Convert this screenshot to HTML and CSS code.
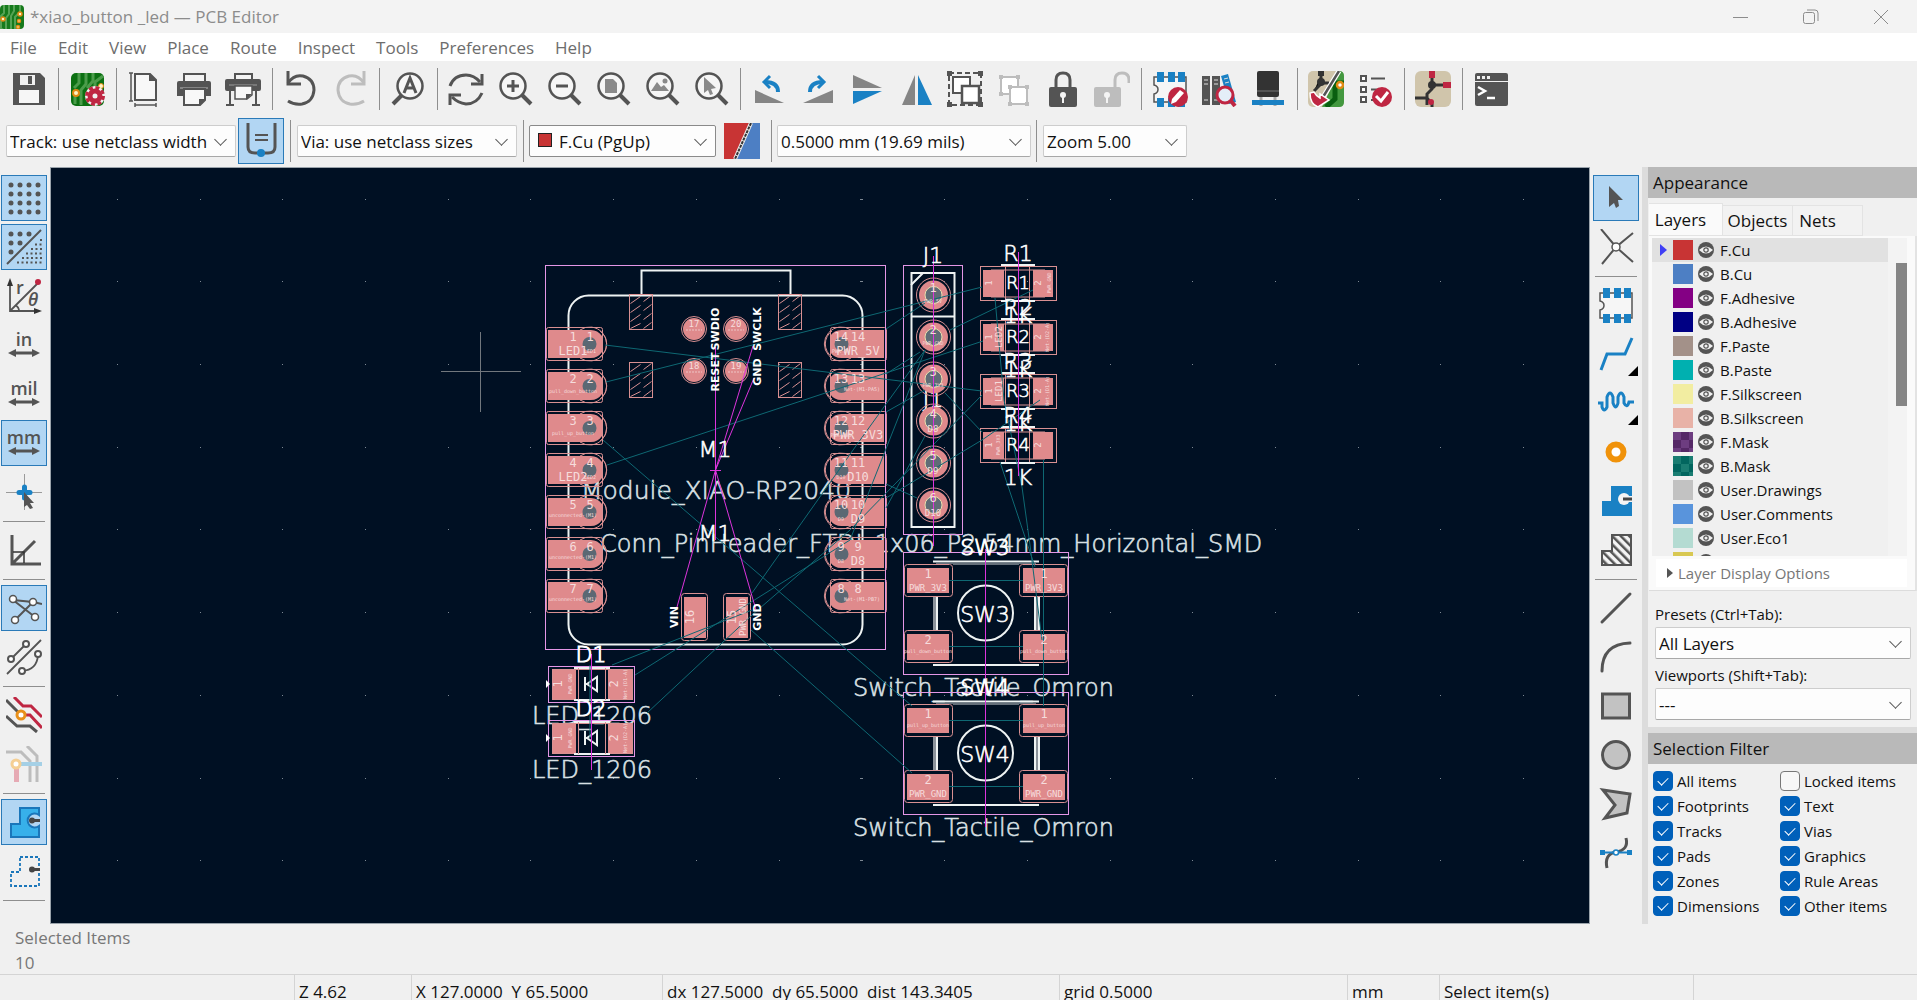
FILE: index.html
```html
<!DOCTYPE html>
<html lang="en">
<head>
<meta charset="UTF-8">
<meta name="viewport" content="width=device-width, initial-scale=1.0">
<title>*xiao_button _led — PCB Editor</title>
<link rel="stylesheet" href="styles.css">
</head>
<body>

<!-- shared shapes -->
<svg class="defs" aria-hidden="true">
    <defs>
        <g id="lens"><circle cx="15" cy="15" r="12.5" fill="#f6f6f6" stroke="#545454" stroke-width="2.5"/><path d="M24 24L33 33" stroke="#545454" stroke-width="4"/></g>
        <g id="eye"><circle cx="8" cy="8" r="8" fill="#545454"/><path d="M1 8Q8 1 15 8Q8 15 1 8Z" fill="#f0f0f0"/><circle cx="8" cy="8" r="2.200" fill="none" stroke="#545454" stroke-width="1.200"/></g>
        <g id="arrows"><path d="M8 0H27" stroke="#545454" stroke-width="3"/><path d="M2 0L10 -4V4ZM34 0L26 -4V4Z" fill="#545454"/></g>
        <g id="chip"><path d="M2 6H34V31H2V23Q6 22 6 18.500Q6 15 2 14Z" fill="#f6f6f6" stroke="#545454" stroke-width="1.500"/><path d="M5 1h7v10H5zM16 1h7v10H16zM26 1h7v10H26zM5 27h7v9H5zM16 27h7v9H16zM26 27h7v9H26z" fill="#1a81c4"/></g>
    </defs>
</svg>

<header class="titlebar">
    <svg class="logo" viewBox="0 0 24 24"><rect width="24" height="24" rx="4" fill="#167a1c"/><path d="M4 0V8L1 11V24M9 0V9L6 13V24M14 0V6L11 11V24M20 0V7L15 12V24" stroke="#55a354" stroke-width="2" fill="none"/><g fill="#fff3c4" stroke="#e08a12" stroke-width="1.500"><circle cx="3" cy="14" r="2"/><circle cx="20" cy="9" r="2"/><circle cx="19" cy="16" r="1.500"/><circle cx="18" cy="22" r="1.500"/></g></svg>
    <h1>*xiao_button _led — PCB Editor</h1>
    <div class="window-controls">
        <button aria-label="Minimize"><svg viewBox="0 0 16 16"><path d="M0 8.500H15"/></svg></button>
        <button aria-label="Restore"><svg viewBox="0 0 16 16"><rect x="0.500" y="3.500" width="11" height="11" rx="2"/><path d="M4 1H12Q15 1 15 4V12"/></svg></button>
        <button aria-label="Close"><svg viewBox="0 0 16 16"><path d="M1 1L15 15M15 1L1 15"/></svg></button>
    </div>
</header>

<nav class="menubar">
    <button>File</button>
    <button>Edit</button>
    <button>View</button>
    <button>Place</button>
    <button>Route</button>
    <button>Inspect</button>
    <button>Tools</button>
    <button>Preferences</button>
    <button>Help</button>
</nav>

<div class="toolbar">
    <button class="tool" aria-label="Save"><svg viewBox="0 0 36 36"><path d="M3 2H29L34 7V34H2V2Z" fill="#545454"/><path d="M9 4V14H24V4Z" fill="#f0f0f0"/><rect x="17" y="5" width="4" height="8" fill="#545454"/><rect x="8" y="19" width="20" height="13" fill="#f6f6f6"/></svg></button>
    <span class="sep"></span>
    <button class="tool" aria-label="Board setup"><svg viewBox="0 0 36 36"><rect x="2" y="2" width="33" height="33" rx="5" fill="#0c7012"/><path d="M10 2V12L5 17M17 2V13L12 19V34M24 2V10L18 17M34 5L26 11V16M6 22V33" stroke="#4b9c4a" stroke-width="3" fill="none"/><circle cx="7" cy="22" r="3" fill="#fff3c4" stroke="#e08a12" stroke-width="2"/><circle cx="32" cy="15" r="2.500" fill="#fff3c4" stroke="#e08a12"/><circle cx="26" cy="25" r="10" fill="#f0f0f0"/><circle cx="26" cy="25" r="8.500" fill="none" stroke="#bf2642" stroke-width="3" stroke-dasharray="4 2.700"/><circle cx="26" cy="25" r="5" fill="none" stroke="#bf2642" stroke-width="5"/></svg></button>
    <span class="sep"></span>
    <button class="tool" aria-label="Page settings"><svg viewBox="0 0 36 36"><path d="M8 3H23L29 9V29H8Z" fill="#f8f8f8" stroke="#545454" stroke-width="2"/><path d="M22 2V10H30Z" fill="#545454"/><path d="M2 2H6M4 2V30M2 30H6M8 32V36M8 34H29M29 32V36" stroke="#545454" stroke-width="1.500" fill="none"/></svg></button>
    <button class="tool" aria-label="Print"><svg viewBox="0 0 36 36"><rect x="8" y="3" width="21" height="9" fill="#f4f4f4" stroke="#545454" stroke-width="2"/><path d="M3 10H33Q35 10 35 12V25H1V12Q1 10 3 10Z" fill="#545454"/><path d="M4 17H32" stroke="#858585" stroke-width="2"/><path d="M8 18H29V29L24 34H8Z" fill="#f8f8f8" stroke="#545454" stroke-width="2"/><path d="M30 28H23V35Z" fill="#545454"/></svg></button>
    <button class="tool" aria-label="Plot"><svg viewBox="0 0 36 36"><rect x="10" y="3" width="17" height="8" fill="#f4f4f4" stroke="#545454" stroke-width="2"/><rect x="0" y="8" width="36" height="12" rx="2" fill="#545454"/><path d="M4 14H32" stroke="#858585" stroke-width="1.500"/><path d="M5 18V34M1 34H9M31 18V34M27 34H35" stroke="#545454" stroke-width="2"/><path d="M10 15H27V24L22 28H10Z" fill="#f8f8f8" stroke="#545454" stroke-width="1.500"/><path d="M27 23H21V29Z" fill="#545454"/></svg></button>
    <span class="sep"></span>
    <button class="tool" aria-label="Undo"><svg viewBox="0 0 36 36"><path d="M5 12Q11 3 20 5Q31 8 31 19Q30 31 19 33Q11 34 5 30" fill="none" stroke="#545454" stroke-width="3"/><path d="M5 0V13H18" fill="none" stroke="#545454" stroke-width="3"/></svg></button>
    <button class="tool" aria-label="Redo" disabled><svg viewBox="0 0 36 36"><path d="M32 12Q26 3 17 5Q6 8 6 19Q7 31 18 33Q26 34 32 30" fill="none" stroke="#bdbdbd" stroke-width="3"/><path d="M32 0V13H19" fill="none" stroke="#bdbdbd" stroke-width="3"/></svg></button>
    <span class="sep"></span>
    <button class="tool" aria-label="Find"><svg viewBox="0 0 36 36"><circle cx="20" cy="15" r="12.500" fill="#f6f6f6" stroke="#545454" stroke-width="2.500"/><path d="M12 24L3 33" stroke="#545454" stroke-width="4"/><path d="M14 22L20 7L26 22M16 17H24" fill="none" stroke="#545454" stroke-width="3"/></svg></button>
    <span class="sep"></span>
    <button class="tool" aria-label="Refresh"><svg viewBox="0 0 36 36"><path d="M2 15Q6 4 18 4Q26 4 32 11M34 22Q29 33 18 33Q10 32 4 26" fill="none" stroke="#545454" stroke-width="3"/><path d="M34 3V13H23M2 34V24H13" fill="none" stroke="#545454" stroke-width="3"/></svg></button>
    <button class="tool" aria-label="Zoom in"><svg viewBox="0 0 36 36"><use href="#lens" x="1"/><path d="M10 15H22M16 9V21" stroke="#545454" stroke-width="3"/></svg></button>
    <button class="tool" aria-label="Zoom out"><svg viewBox="0 0 36 36"><use href="#lens" x="1"/><path d="M10 15H22" stroke="#545454" stroke-width="3"/></svg></button>
    <button class="tool" aria-label="Zoom to page"><svg viewBox="0 0 36 36"><use href="#lens" x="1"/><path d="M10 8H18L22 12V22H10Z" fill="#8a8a8a"/></svg></button>
    <button class="tool" aria-label="Zoom to objects"><svg viewBox="0 0 36 36"><use href="#lens" x="1"/><path d="M7 20L13 11L17 16L20 14L25 20Z" fill="#8a8a8a"/><circle cx="21" cy="10" r="2.500" fill="#8a8a8a"/></svg></button>
    <button class="tool" aria-label="Zoom to selection"><svg viewBox="0 0 36 36"><use href="#lens" x="1"/><path d="M11 6L23 17L18 18L20 23L17 24L15 19L11 22Z" fill="#8a8a8a"/></svg></button>
    <span class="sep"></span>
    <button class="tool" aria-label="Rotate counterclockwise"><svg viewBox="0 0 36 36"><path d="M4 19L33 32H4Z" fill="#858585"/><path d="M27 21Q27 11 14 11" fill="none" stroke="#1a81c4" stroke-width="4"/><path d="M19 5L13 11L19 17" fill="none" stroke="#1a81c4" stroke-width="3"/></svg></button>
    <button class="tool" aria-label="Rotate clockwise"><svg viewBox="0 0 36 36"><path d="M33 19L3 32H33Z" fill="#858585"/><path d="M10 21Q10 11 23 11" fill="none" stroke="#1a81c4" stroke-width="4"/><path d="M18 5L24 11L18 17" fill="none" stroke="#1a81c4" stroke-width="3"/></svg></button>
    <button class="tool" aria-label="Flip vertically"><svg viewBox="0 0 36 36"><path d="M4 4L33 17H4Z" fill="#858585"/><path d="M4 20H33L4 33Z" fill="#1a81c4"/></svg></button>
    <button class="tool" aria-label="Mirror"><svg viewBox="0 0 36 36"><path d="M17 4V34H4Z" fill="#858585"/><path d="M20 4V34H34Z" fill="#1a81c4"/></svg></button>
    <button class="tool" aria-label="Group"><svg viewBox="0 0 36 36"><rect x="2" y="2" width="32" height="32" fill="none" stroke="#545454" stroke-width="2" stroke-dasharray="5 3"/><path d="M0 0h5v5H0zM31 0h5v5H31zM0 31h5v5H0zM31 31h5v5H31z" fill="#545454"/><rect x="6" y="6" width="17" height="16" fill="#fff" stroke="#545454" stroke-width="2"/><rect x="15" y="15" width="17" height="17" fill="#fff" stroke="#545454" stroke-width="2.500"/></svg></button>
    <button class="tool" aria-label="Ungroup" disabled><svg viewBox="0 0 36 36"><g fill="#fff" stroke="#bdbdbd" stroke-width="2"><rect x="5" y="6" width="17" height="17"/><rect x="14" y="16" width="17" height="17"/></g><path d="M3 4h4v4H3zM20 4h4v4h-4zM3 21h4v4H3zM12 14h4v4h-4zM29 14h4v4h-4zM12 31h4v4h-4zM29 31h4v4h-4z" fill="#bdbdbd"/></svg></button>
    <button class="tool" aria-label="Lock"><svg viewBox="0 0 36 36"><path d="M11 17V9Q11 2 18 2Q25 2 25 9V17" fill="none" stroke="#545454" stroke-width="3"/><rect x="4" y="16" width="28" height="20" rx="2" fill="#545454"/><circle cx="18" cy="24" r="3" fill="#f4f4f4"/><path d="M17 24h2v8h-2z" fill="#f4f4f4"/></svg></button>
    <button class="tool" aria-label="Unlock" disabled><svg viewBox="0 0 36 36"><path d="M21 17V9Q21 2 28 2Q35 2 35 9V12" fill="none" stroke="#bdbdbd" stroke-width="3"/><rect x="0" y="16" width="27" height="20" rx="2" fill="#bdbdbd"/><circle cx="13" cy="24" r="3" fill="#f4f4f4"/><path d="M12 24h2v8h-2z" fill="#f4f4f4"/></svg></button>
    <span class="sep"></span>
    <button class="tool" aria-label="Footprint editor"><svg viewBox="0 0 36 36"><use href="#chip"/><circle cx="26" cy="26" r="10" fill="#bf2642"/><path d="M19 33L20 28L28 19L32 22L24 31Z" fill="#fff"/></svg></button>
    <button class="tool" aria-label="Footprint browser"><svg viewBox="0 0 36 36"><path d="M1 5h8v29H1zM11 5h8v29h-8z" fill="#545454"/><path d="M20 5l7-2 8 28-7 2z" fill="#1a81c4"/><path d="M3 9h4M3 13h4M3 29h4M13 9h4M13 13h4M13 29h4M23 8l4-1M24 12l4-1" stroke="#ddd"/><circle cx="24" cy="24" r="8" fill="#e4eef8" stroke="#bf2642" stroke-width="3"/><path d="M30 30L34 35" stroke="#bf2642" stroke-width="4"/></svg></button>
    <button class="tool" aria-label="3D viewer"><svg viewBox="0 0 36 36"><rect x="7" y="0" width="22" height="26" rx="2" fill="#333"/><path d="M7 20H29" stroke="#777"/><path d="M11 26V35M25 26V35" stroke="#aaa" stroke-width="3"/><path d="M2 29H34V34H2Z" fill="#1a81c4"/></svg></button>
    <span class="sep"></span>
    <button class="tool" aria-label="Update PCB from schematic"><svg viewBox="0 0 36 36"><rect width="36" height="36" rx="5" fill="#d0c5ab"/><path d="M31 0Q36 0 36 5V31Q36 36 31 36H14Z" fill="#43983f"/><path d="M36 12H27V28L18 36" stroke="#0a5f10" stroke-width="5" fill="none"/><path d="M10 0h6v5h-6z" fill="#333"/><path d="M13 4V13L6 20M13 12H21" stroke="#333" stroke-width="3"/><circle cx="13" cy="11" r="4" fill="#333"/><path d="M31 0L14 28" stroke="#fff" stroke-width="5"/><path d="M31 0L15 26" stroke="#545454" stroke-width="2.500"/><circle cx="32" cy="14" r="3" fill="#fff" stroke="#e08a12" stroke-width="2.500"/><path d="M2 22Q2 33 10 36L21 29L12 23V27Q8 25 6 21Z" fill="#bf2642" stroke="#fff" stroke-width="1.500"/></svg></button>
    <button class="tool" aria-label="Design rules checker"><svg viewBox="0 0 36 36"><g fill="#fff" stroke="#545454" stroke-width="2"><rect x="4" y="5" width="5" height="5"/><rect x="4" y="16" width="5" height="5"/><rect x="4" y="26" width="5" height="5"/></g><path d="M14 7.500H28M14 18.500H23M14 29H17" stroke="#545454" stroke-width="2"/><circle cx="25" cy="26" r="10" fill="#bf2642"/><path d="M19 25L24 30L31 21" fill="none" stroke="#fff" stroke-width="3"/></svg></button>
    <span class="sep"></span>
    <button class="tool" aria-label="Schematic editor"><svg viewBox="0 0 36 36"><rect width="36" height="36" rx="6" fill="#d0c5ab"/><path d="M14 0h6v7h-6zM28 11h8v6h-8z" fill="#bf2642"/><path d="M17 7V18L12 23V34M0 27H12M17 14H28M12 27L17 33V36" stroke="#333" stroke-width="3" fill="none"/><circle cx="17" cy="14" r="4" fill="#333"/><circle cx="16" cy="31" r="3" fill="#bf2642"/></svg></button>
    <span class="sep"></span>
    <button class="tool" aria-label="Scripting console"><svg viewBox="0 0 36 36"><rect x="2" y="2" width="33" height="33" rx="2" fill="#545454"/><path d="M2 10.500H35" stroke="#f0f0f0"/><path d="M4 5h3v3H4zM9 5h3v3H9zM14 5h3v3h-3z" fill="#f0f0f0"/><path d="M5 16L12 20L5 24" fill="none" stroke="#fff" stroke-width="2.500"/><path d="M14 27H22" stroke="#fff" stroke-width="2.500"/></svg></button>
</div>

<div class="toolbar options">
    <div class="combo track"><select aria-label="Track width"><option>Track: use netclass width</option></select></div>
    <button class="tool active" aria-label="Auto track width"><svg viewBox="0 0 36 36"><path d="M5 0V24Q5 30 12 30H25Q32 30 32 24V0" fill="none" stroke="#545454" stroke-width="3"/><path d="M12 12H25M12 17H25" stroke="#545454" stroke-width="2"/><circle cx="18" cy="30" r="4" fill="#1a81c4"/></svg></button>
    <span class="sep"></span>
    <div class="combo via"><select aria-label="Via size"><option>Via: use netclass sizes</option></select></div>
    <span class="sep"></span>
    <div class="combo layer"><i class="swatch"></i><select aria-label="Active layer"><option>F.Cu (PgUp)</option></select></div>
    <button class="tool" aria-label="Layer pair"><svg viewBox="0 0 36 36"><rect width="36" height="36" fill="#4d7fc4"/><path d="M0 0H26L10 36H0Z" fill="#c83434"/><path d="M27 0L11 36" stroke="#eee" stroke-width="4"/><path d="M27 0L11 36" stroke="#333" stroke-width="2" stroke-dasharray="3 1"/></svg></button>
    <span class="sep"></span>
    <div class="combo grid"><select aria-label="Grid"><option>0.5000 mm (19.69 mils)</option></select></div>
    <span class="sep"></span>
    <div class="combo zoom"><select aria-label="Zoom"><option>Zoom 5.00</option></select></div>
</div>

<main class="workspace">
    <div class="side-tools left">
        <button class="tool active" aria-label="Show grid"><svg viewBox="0 0 36 36"><path d="M5 5H33M5 14H33M5 23H33M5 32H33" stroke="#545454" stroke-width="5" stroke-linecap="round" stroke-dasharray="0 9"/></svg></button>
        <button class="tool active" aria-label="Grid overrides"><svg viewBox="0 0 36 36"><path d="M5 5H24M5 14H15M5 23H6" stroke="#545454" stroke-width="5" stroke-linecap="round" stroke-dasharray="0 9"/><path d="M35 1L1 35" stroke="#545454" stroke-width="2"/><path d="M34 11H36M29 15.500H36M25 20H36M20 24.500H36M16 29H36M11 33.500H36" stroke="#545454" stroke-width="2" stroke-dasharray="2 2.500"/></svg></button>
        <button class="tool" aria-label="Polar coordinates"><svg viewBox="0 0 36 36"><path d="M4 4V33H32M4 33L32 5M9 27Q13 29 13 33" fill="none" stroke="#545454" stroke-width="1.800"/><path d="M1 8L4 0L7 8ZM28 30L36 33L28 36Z" fill="#333"/><circle cx="32" cy="4" r="3" fill="#bf2642"/><text x="10" y="16" class="ico-text">r</text><text x="22" y="28" class="ico-text theta">θ</text></svg></button>
        <button class="tool" aria-label="Inches"><svg viewBox="0 0 36 36"><text x="18" y="19" text-anchor="middle" class="ico-text">in</text><use href="#arrows" y="26"/></svg></button>
        <button class="tool" aria-label="Mils"><svg viewBox="0 0 36 36"><text x="18" y="19" text-anchor="middle" class="ico-text">mil</text><use href="#arrows" y="26"/></svg></button>
        <button class="tool active" aria-label="Millimeters"><svg viewBox="0 0 36 36"><text x="18" y="19" text-anchor="middle" class="ico-text">mm</text><use href="#arrows" y="26"/></svg></button>
        <button class="tool" aria-label="Full-window crosshair"><svg viewBox="0 0 36 36"><path d="M0 18.500H36M18.500 0V36" stroke="#9a9a9a"/><path d="M18.500 13V24M13 18.500H24" stroke="#1a81c4" stroke-width="5" stroke-linecap="round"/><path d="M18 18L28 29L24 29L27 34L24 35L21 31L18 33Z" fill="#545454"/></svg></button>
        <span class="sep"></span>
        <button class="tool" aria-label="45 degree mode"><svg viewBox="0 0 36 36"><path d="M6 3V32H35M6 32L29 9" fill="none" stroke="#545454" stroke-width="3"/><path d="M7 20H18V31" fill="none" stroke="#333" stroke-width="1.500"/></svg></button>
        <span class="sep"></span>
        <button class="tool active" aria-label="Show ratsnest"><svg viewBox="0 0 36 36"><path d="M7 10L29 27M9 30L27 12M7 10L27 12L36 14" stroke="#545454" stroke-width="2"/><g fill="#fff" stroke="#545454" stroke-width="1.500"><circle cx="7" cy="9" r="3.500"/><circle cx="27" cy="12" r="3.500"/><circle cx="9" cy="30" r="3.500"/><circle cx="29" cy="27" r="3.500"/></g></svg></button>
        <button class="tool" aria-label="Curved ratsnest"><svg viewBox="0 0 36 36"><path d="M35 1L1 35M5 20L20 5M16 32Q31 31 32 16" fill="none" stroke="#545454" stroke-width="1.800"/><g fill="#fff" stroke="#545454" stroke-width="2"><circle cx="20" cy="5" r="3"/><circle cx="5" cy="20" r="3"/><circle cx="32" cy="15" r="3"/><circle cx="16" cy="32" r="3"/></g></svg></button>
        <span class="sep"></span>
        <button class="tool" aria-label="Inactive layers"><svg viewBox="0 0 36 36"><path d="M0 3L14 17M0 19L11 29H24L31 35" stroke="#545454" stroke-width="3" fill="none"/><path d="M8 0L17 9H25L36 20M17 18H24L36 31" stroke="#bf2642" stroke-width="3" fill="none"/><circle cx="15" cy="18" r="4" fill="#fff" stroke="#e8901a" stroke-width="3"/></svg></button>
        <button class="tool" aria-label="Net highlight" disabled><svg viewBox="0 0 36 36"><path d="M0 6H15L24 15V36M21 0L31 10V36" stroke="#bdbdbd" stroke-width="3" fill="none"/><path d="M14 18H36" stroke="#a5d0e6" stroke-width="4"/><path d="M10.500 20V36" stroke="#e6aab4" stroke-width="5"/><circle cx="10" cy="18" r="4" fill="#fff" stroke="#f5cf94" stroke-width="3"/></svg></button>
        <span class="sep"></span>
        <button class="tool active" aria-label="Show filled zones"><svg viewBox="0 0 36 36"><path d="M14 4H33V11A7 7 0 1 0 33 22V33H5V20H14Z" fill="#37b0ea" stroke="#1a76ba" stroke-width="2"/><path d="M26 16.500H34" stroke="#454545" stroke-width="3"/><circle cx="26" cy="16.500" r="3" fill="#454545"/></svg></button>
        <button class="tool" aria-label="Show zone outlines"><svg viewBox="0 0 36 36"><path d="M14 4H33V33H5V19H14Z" fill="none" stroke="#1a76ba" stroke-width="1.800" stroke-dasharray="3 2"/><path d="M26 16.500H34" stroke="#454545" stroke-width="3"/><circle cx="26" cy="16.500" r="3" fill="#454545"/></svg></button>
        <span class="sep"></span>
    </div>

    <section class="board" aria-label="Board">
        <svg viewBox="51 168 1538 755">
            <defs>
                <path id="dots" class="dot" d="M117 0h1M200 0h1M282 0h1M365 0h1M448 0h1M530 0h1M613 0h1M696 0h1M779 0h1M860 0h3M944 0h1M1027 0h1M1110 0h1M1192 0h1M1275 0h1M1358 0h1M1440 0h1M1523 0h1"/>
                <g id="padL">
                    <path class="pad" d="M548 -14H589A14 14 0 0 1 602 -8V8A14 14 0 0 1 589 14H548Z"/>
                    <rect class="ol" x="546.500" y="-16.500" width="56" height="33" rx="2"/>
                    <path class="ol" d="M580 -14A17 17 0 1 1 580 14M600 -13A16 16 0 0 1 600 13"/>
                    <circle class="hole" cx="589.500" r="7"/>
                </g>
                <g id="padR">
                    <path class="pad" d="M884 -14H842A14 14 0 0 0 830 -8V8A14 14 0 0 0 842 14H884Z"/>
                    <rect class="ol" x="830.500" y="-16.500" width="56" height="33" rx="2"/>
                    <path class="ol" d="M851 -14A17 17 0 1 0 851 14M832 -13A16 16 0 0 0 832 13"/>
                    <circle class="hole" cx="841.500" r="7"/>
                </g>
                <g id="tp"><circle r="11" class="pad"/><circle r="12.500" class="ol"/><path d="M-8 1H8" stroke="#eec4c4" stroke-dasharray="2 1"/></g>
                <g id="slot"><rect width="23" height="35" class="ol"/><path class="ol" d="M1 9L11 2M1 18L11 11M1 27L11 20M1 34L11 29M14 7L22 1M14 16L22 10M14 25L22 19M14 34L22 28"/></g>
                <g id="pin"><circle r="14.500" class="pad"/><circle r="17" class="ol"/><circle r="8.500" fill="#606c76" stroke="#eadfae"/></g>
                <g id="chip2">
                    <rect class="ol" x="-37.500" y="-16.500" width="76" height="34"/>
                    <path class="pad" d="M-35 -13H-14V14H-35ZM15 -13H35V14H15Z"/>
                    <path class="silk" d="M-17 -18H17M-17 18H17"/>
                    <path class="ol" d="M-27 -13H27M-27 14H27M-12.500 -16V17M11.500 -16V17"/>
                </g>
                <g id="led">
                    <rect class="court" x="-43.500" y="-17.500" width="86" height="36"/>
                    <path class="pad" d="M-39 -14H-16V15H-39ZM16 -14H40V15H16Z"/>
                    <rect class="ol" x="-39.500" y="-14.500" width="80" height="30"/>
                    <path class="silk" d="M-18 -16H18M-18 16H18"/>
                    <path class="ol" d="M-13.500 -16V16M13.500 -16V16"/>
                    <path class="silk" d="M-7 -7V7M5 -7V7L-5 0ZM-7 0H-4"/>
                    <path d="M-46 -4L-42 0L-46 4Z" fill="#fff"/>
                </g>
                <g id="sw">
                    <path d="M935 45V78M1037 45V78" stroke="#8b939b" stroke-width="4"/>
                    <path class="silk" d="M933 9.500H1039M933 113H1039M937 12V110M1035 12V110M1039 44V80"/>
                    <path d="M936 12H1036" stroke="#c8ced2"/>
                    <circle class="silk" cx="985.500" cy="61" r="27.500"/>
                    <path class="bg" d="M904 12h49v33h-49zM1019 12h49v33h-49zM904 78h49v33h-49zM1019 78h49v33h-49z"/>
                    <path class="pad" d="M907 16h42v25h-42zM1023 16h42v25h-42zM907 82h42v26h-42zM1023 82h42v26h-42z"/>
                    <g class="ol"><rect x="904.500" y="12.500" width="48" height="32" rx="3"/><rect x="1019.500" y="12.500" width="48" height="32" rx="3"/><rect x="904.500" y="78.500" width="48" height="32" rx="3"/><rect x="1019.500" y="78.500" width="48" height="32" rx="3"/></g>
                    <rect class="court" x="903.500" y="0.500" width="165" height="122"/>
                    <path class="rat" d="M949 28.500H1023M949 94.500H1023"/>
                </g>
            </defs>

            <use href="#dots" y="199.500"/><use href="#dots" y="281.500"/><use href="#dots" y="364.500"/><use href="#dots" y="447.500"/><use href="#dots" y="529.500"/><use href="#dots" y="612.500"/><use href="#dots" y="695.500"/><use href="#dots" y="778.500"/><use href="#dots" y="860.500"/>
            <path d="M441 371.500H521M480.500 332V412" stroke="#71777d"/>

            <!-- module M1 -->
            <path class="silk" d="M641.500 295V270.500H790.500V295"/>
            <rect class="silk" x="568.500" y="295.500" width="294" height="349" rx="20"/>
            <use href="#slot" x="629.500" y="294.500"/><use href="#slot" x="778.500" y="294.500"/>
            <use href="#slot" x="629.500" y="362.500"/><use href="#slot" x="778.500" y="362.500"/>
            <g class="txt">
                <text x="581" y="499" class="module">Module_XIAO-RP2040</text>
                <text x="600" y="552">Conn_PinHeader_FTDI_1x06_P2.54mm_Horizontal_SMD</text>
                <text x="532" y="724">LED_1206</text>
                <text x="532" y="778">LED_1206</text>
                <text x="853" y="696">Switch_Tactile_Omron</text>
                <text x="853" y="836">Switch_Tactile_Omron</text>
            </g>
            <use href="#padL" y="344"/><use href="#padL" y="386"/><use href="#padL" y="428"/><use href="#padL" y="470"/><use href="#padL" y="512"/><use href="#padL" y="554"/><use href="#padL" y="596"/>
            <use href="#padR" y="344"/><use href="#padR" y="386"/><use href="#padR" y="428"/><use href="#padR" y="470"/><use href="#padR" y="512"/><use href="#padR" y="554"/><use href="#padR" y="596"/>
            <use href="#tp" x="694" y="329"/><use href="#tp" x="736" y="329"/><use href="#tp" x="694" y="371"/><use href="#tp" x="736" y="371"/>
            <path class="pad" d="M684 597h22v41h-22zM726 597h22v41h-22z"/>
            <rect class="ol" x="681.500" y="593.500" width="26" height="47" rx="3"/><rect class="ol" x="723.500" y="593.500" width="27" height="47" rx="3"/>
            <rect class="court" x="545.500" y="265.500" width="340" height="384"/>

            <!-- header J1 -->
            <rect class="silk" x="911.500" y="273" width="43" height="254"/>
            <path class="silk" d="M911 316.500H955M911 285L923 273"/>
            <text class="ref" x="933" y="407">J1</text>
            <use href="#pin" x="933.500" y="295"/><use href="#pin" x="933.500" y="337"/><use href="#pin" x="933.500" y="379"/><use href="#pin" x="933.500" y="421"/><use href="#pin" x="933.500" y="463"/><use href="#pin" x="933.500" y="505"/>
            <rect class="court" x="903.500" y="265.500" width="59" height="269"/>

            <!-- resistors, LEDs, switches -->
            <use href="#chip2" x="1018" y="283"/><use href="#chip2" x="1018" y="337"/><use href="#chip2" x="1018" y="391"/><use href="#chip2" x="1018" y="445"/>
            <use href="#led" x="592" y="684"/><use href="#led" x="592" y="738"/>
            <use href="#sw" y="552"/><use href="#sw" y="692"/>

            <!-- ratsnest -->
            <path class="rat" d="M605 345L982 391M606 382L982 287M607 465L983 341M603 440L912 706M751 630L912 773M752 593L858 443L925 350M612 665L706 628L752 610M635 675L850 540L925 350M647 713L752 615L850 530L982 395M925 303L886 329M1043.500 460V706M1000 462L1035 567M1022 487L1030 545L1042 640M945 393L982 432M886 484L917 498M886 508L925 436M886 498L982 440L1040 400M950 330L1033 290M886 412L925 390M995 298L1004 400L1022 487M590 665V738M886 374L920 352"/>

            <!-- anchors -->
            <path class="anchor" d="M715.500 347V540M753 346L715.500 470L677 607M754 378L715.500 470L756 610M710 470.500H721M591.500 654V770M933.500 256V546M1018.500 252V476M985.500 549V827"/>

            <g class="ref">
                <text x="715" y="457">M1</text><text x="715" y="541">M1</text>
                <text x="591" y="662" class="bold">D1</text><text x="591" y="716" class="bold">D2</text>
                <text x="933" y="263">J1</text>
                <text x="1018" y="261">R1</text><text x="1018" y="315">R2</text><text x="1018" y="369">R3</text><text x="1018" y="423">R4</text>
                <text x="1018" y="323">1K</text><text x="1018" y="377">1K</text><text x="1018" y="431">1K</text><text x="1018" y="485">1K</text>
                <text x="985" y="555" class="bold">SW3</text><text x="985" y="695" class="bold">SW4</text>
                <text x="985" y="622">SW3</text><text x="985" y="762">SW4</text>
            </g>
            <g class="ref small">
                <text x="1018" y="289">R1</text><text x="1018" y="343">R2</text><text x="1018" y="397">R3</text><text x="1018" y="451">R4</text>
            </g>
            <g class="silk-label">
                <text transform="translate(719 329) rotate(-90)">SWDIO</text><text transform="translate(719 372) rotate(-90)">RESET</text>
                <text transform="translate(761 329) rotate(-90)">SWCLK</text><text transform="translate(761 372) rotate(-90)">GND</text>
                <text transform="translate(678 617) rotate(-90)">VIN</text><text transform="translate(761 617) rotate(-90)">GND</text>
            </g>

            <!-- pad numbers and net names -->
            <g class="num">
                <text x="573" y="341">1</text><text x="590" y="341">1</text><text x="573" y="383">2</text><text x="590" y="383">2</text><text x="573" y="425">3</text><text x="590" y="425">3</text><text x="573" y="467">4</text><text x="590" y="467">4</text><text x="573" y="509">5</text><text x="590" y="509">5</text><text x="573" y="551">6</text><text x="590" y="551">6</text><text x="573" y="593">7</text><text x="590" y="593">7</text>
                <text x="841" y="341">14</text><text x="858" y="341">14</text><text x="841" y="383">13</text><text x="858" y="383">13</text><text x="841" y="425">12</text><text x="858" y="425">12</text><text x="841" y="467">11</text><text x="858" y="467">11</text><text x="841" y="509">10</text><text x="858" y="509">10</text><text x="841" y="551">9</text><text x="858" y="551">9</text><text x="841" y="593">8</text><text x="858" y="593">8</text>
                <text x="573" y="355">LED1</text><text x="573" y="481">LED2</text><text x="858" y="355">PWR_5V</text><text x="858" y="439">PWR_3V3</text><text x="858" y="481">D10</text><text x="858" y="523">D9</text><text x="858" y="565">D8</text>
                <text x="933" y="292">1</text><text x="933" y="334">2</text><text x="933" y="376">3</text><text x="933" y="418">4</text><text x="933" y="460">5</text><text x="933" y="502">6</text>
                <text x="928" y="578">1</text><text x="1044" y="578">1</text><text x="928" y="644">2</text><text x="1044" y="644">2</text><text x="928" y="718">1</text><text x="1044" y="718">1</text><text x="928" y="784">2</text><text x="1044" y="784">2</text>
                <text transform="translate(694 617) rotate(-90)">16</text><text transform="translate(736 617) rotate(-90)">15</text>
                <text transform="translate(562 684) rotate(-90)">1</text><text transform="translate(618 684) rotate(-90)">2</text><text transform="translate(562 738) rotate(-90)">1</text><text transform="translate(618 738) rotate(-90)">2</text>
            </g>
            <g class="net">
                <text x="694" y="327">17</text><text x="736" y="327">20</text><text x="694" y="369">18</text><text x="736" y="369">19</text>
                <text x="928" y="591">PWR_3V3</text><text x="1044" y="591">PWR_3V3</text><text x="928" y="797">PWR_GND</text><text x="1044" y="797">PWR_GND</text>
                <text x="933" y="432">D8</text><text x="933" y="474">D9</text><text x="933" y="516">D10</text>
                <text transform="translate(746 617) rotate(-90)">PWR_GND</text>
                <text transform="translate(992 283) rotate(-90)">1</text><text transform="translate(992 337) rotate(-90)">1</text><text transform="translate(992 391) rotate(-90)">1</text><text transform="translate(992 445) rotate(-90)">1</text>
                <text transform="translate(1041 283) rotate(-90)">2</text><text transform="translate(1041 337) rotate(-90)">2</text><text transform="translate(1041 391) rotate(-90)">2</text><text transform="translate(1041 445) rotate(-90)">2</text>
                <text transform="translate(1002 337) rotate(-90)">LED2</text><text transform="translate(1002 391) rotate(-90)">LED1</text>
            </g>
            <g class="tiny">
                <text x="590" y="353">LED1</text><text x="590" y="479">LED2</text><text x="841" y="353">PWR_5V</text><text x="841" y="437">PWR_3V3</text><text x="841" y="479">D10</text><text x="841" y="521">D9</text><text x="841" y="563">D8</text>
                <text x="573" y="393">pull_down_button</text><text x="573" y="435">pull_up_button</text><text x="573" y="517">unconnected-(M1)</text><text x="573" y="559">unconnected-(M1)</text><text x="573" y="601">unconnected-(M1)</text>
                <text x="862" y="391">Net-(M1-PA5)</text><text x="862" y="601">Net-(M1-PB7)</text>
                <text x="933" y="303">PWR_5V</text><text x="933" y="345">PWR_GND</text><text x="933" y="387">PWR_3V3</text>
                <text x="928" y="653">pull_down_button</text><text x="1044" y="653">pull_down_button</text><text x="928" y="727">pull_up_button</text><text x="1044" y="727">pull_up_button</text>
                <text transform="translate(572 684) rotate(-90)">PWR_GND</text><text transform="translate(572 738) rotate(-90)">PWR_GND</text>
                <text transform="translate(627 684) rotate(-90)">Net-(D1-A)</text><text transform="translate(627 738) rotate(-90)">Net-(D2-A)</text>
                <text transform="translate(1051 283) rotate(-90)">PWR_GND</text><text transform="translate(1000 445) rotate(-90)">PWR_3V3</text>
                <text transform="translate(1049 337) rotate(-90)">Net-(D2-A)</text><text transform="translate(1049 391) rotate(-90)">Net-(D1-A)</text>
            </g>
        </svg>
    </section>

    <div class="side-tools right">
        <button class="tool active" aria-label="Select"><svg viewBox="0 0 36 36"><path d="M11 6L25 20H20L21 26L18 28L16 23L11 27Z" fill="#545454"/></svg></button>
        <button class="tool" aria-label="Local ratsnest"><svg viewBox="0 0 36 36"><path d="M3 0L18 18L35 4M4 35L18 18L35 33" fill="none" stroke="#545454" stroke-width="2"/><circle cx="18" cy="18" r="4" fill="#fff" stroke="#545454" stroke-width="1.500"/></svg></button>
        <span class="sep"></span>
        <button class="tool" aria-label="Add footprint"><svg viewBox="0 0 36 36"><use href="#chip"/></svg></button>
        <button class="tool more" aria-label="Route tracks"><svg viewBox="0 0 36 36"><path d="M3 34L9 18H27L34 2" fill="none" stroke="#1a81c4" stroke-width="3"/></svg></button>
        <button class="tool more" aria-label="Tune length"><svg viewBox="0 0 36 36"><path d="M0 18H4V22Q6 28 9 22V12Q12 4 15 12V18Q18 26 20 18V12Q23 4 26 12V18Q29 24 31 17H36" fill="none" stroke="#1a81c4" stroke-width="3"/></svg></button>
        <button class="tool" aria-label="Add via"><svg viewBox="0 0 36 36"><circle cx="18" cy="18" r="7.500" fill="#fff" stroke="#f0920a" stroke-width="6"/></svg></button>
        <button class="tool" aria-label="Add zone"><svg viewBox="0 0 36 36"><path d="M13 3H34V33H4V18H13Z" fill="#1a81c4"/><circle cx="26" cy="16" r="6" fill="#f4f4f4"/><path d="M26 16H34" stroke="#f4f4f4" stroke-width="6"/><path d="M25 16H34" stroke="#454545" stroke-width="3"/></svg></button>
        <button class="tool" aria-label="Add rule area"><svg viewBox="0 0 36 36"><defs><pattern id="stripes" width="6" height="6" patternUnits="userSpaceOnUse" patternTransform="rotate(-45)"><rect width="6" height="6" fill="#f4f4f4"/><rect width="2.500" height="6" fill="#545454"/></pattern></defs><path d="M14 3H33V33H4V19H14Z" fill="url(#stripes)" stroke="#545454" stroke-width="2"/></svg></button>
        <span class="sep"></span>
        <button class="tool" aria-label="Draw line"><svg viewBox="0 0 36 36"><path d="M4 32L32 4" stroke="#545454" stroke-width="3" stroke-linecap="round"/></svg></button>
        <button class="tool" aria-label="Draw arc"><svg viewBox="0 0 36 36"><path d="M4 32Q4 5 32 4" fill="none" stroke="#545454" stroke-width="3" stroke-linecap="round"/></svg></button>
        <button class="tool" aria-label="Draw rectangle"><svg viewBox="0 0 36 36"><rect x="4.500" y="6" width="27" height="24" fill="#c2c2c2" stroke="#545454" stroke-width="3"/></svg></button>
        <button class="tool" aria-label="Draw circle"><svg viewBox="0 0 36 36"><circle cx="18" cy="18" r="13.500" fill="#c2c2c2" stroke="#545454" stroke-width="3"/></svg></button>
        <button class="tool" aria-label="Draw polygon"><svg viewBox="0 0 36 36"><path d="M5 4L32 8L29 27L7 32L17 19Z" fill="#c2c2c2" stroke="#545454" stroke-width="3"/></svg></button>
        <button class="tool" aria-label="Draw bezier"><svg viewBox="0 0 36 36"><path d="M28 3Q31 15 18 17Q6 19 9 33" fill="none" stroke="#545454" stroke-width="3"/><path d="M2 17.500H34" stroke="#1a81c4" stroke-width="2"/><path d="M2 15h5v5H2zM29 15h5v5h-5z" fill="#1a81c4"/><circle cx="18" cy="17.500" r="2.500" fill="#fff" stroke="#1a81c4" stroke-width="1.500"/></svg></button>
    </div>

    <aside class="panel">
        <h2>Appearance</h2>
        <div class="tabs">
            <button class="tab current">Layers</button>
            <button class="tab">Objects</button>
            <button class="tab">Nets</button>
        </div>
        <div class="pane">
            <ul class="layers">
                <li class="selected"><i class="swatch f-cu"></i><svg><use href="#eye"/></svg>F.Cu</li>
                <li><i class="swatch b-cu"></i><svg><use href="#eye"/></svg>B.Cu</li>
                <li><i class="swatch f-adhesive"></i><svg><use href="#eye"/></svg>F.Adhesive</li>
                <li><i class="swatch b-adhesive"></i><svg><use href="#eye"/></svg>B.Adhesive</li>
                <li><i class="swatch f-paste"></i><svg><use href="#eye"/></svg>F.Paste</li>
                <li><i class="swatch b-paste"></i><svg><use href="#eye"/></svg>B.Paste</li>
                <li><i class="swatch f-silk"></i><svg><use href="#eye"/></svg>F.Silkscreen</li>
                <li><i class="swatch b-silk"></i><svg><use href="#eye"/></svg>B.Silkscreen</li>
                <li><i class="swatch f-mask"></i><svg><use href="#eye"/></svg>F.Mask</li>
                <li><i class="swatch b-mask"></i><svg><use href="#eye"/></svg>B.Mask</li>
                <li><i class="swatch drawings"></i><svg><use href="#eye"/></svg>User.Drawings</li>
                <li><i class="swatch comments"></i><svg><use href="#eye"/></svg>User.Comments</li>
                <li><i class="swatch eco1"></i><svg><use href="#eye"/></svg>User.Eco1</li>
                <li><i class="swatch eco2"></i><svg><use href="#eye"/></svg></li>
            </ul>
            <div class="scroll"><div class="thumb"></div></div>
            <button class="display-options">Layer Display Options</button>
        </div>
        <div class="presets">
            <label for="presets">Presets (Ctrl+Tab):</label>
            <div class="combo"><select id="presets"><option>All Layers</option></select></div>
            <label for="viewports">Viewports (Shift+Tab):</label>
            <div class="combo"><select id="viewports"><option>---</option></select></div>
        </div>
        <h2>Selection Filter</h2>
        <div class="filter">
            <label><input type="checkbox" checked>All items</label>
            <label><input type="checkbox">Locked items</label>
            <label><input type="checkbox" checked>Footprints</label>
            <label><input type="checkbox" checked>Text</label>
            <label><input type="checkbox" checked>Tracks</label>
            <label><input type="checkbox" checked>Vias</label>
            <label><input type="checkbox" checked>Pads</label>
            <label><input type="checkbox" checked>Graphics</label>
            <label><input type="checkbox" checked>Zones</label>
            <label><input type="checkbox" checked>Rule Areas</label>
            <label><input type="checkbox" checked>Dimensions</label>
            <label><input type="checkbox" checked>Other items</label>
        </div>
    </aside>
</main>

<div class="info">
    <div>Selected Items</div>
    <div>10</div>
</div>

<footer class="status">
    <span class="message"></span>
    <span class="z">Z 4.62</span>
    <span class="xy">X 127.0000&nbsp; Y 65.5000</span>
    <span class="delta">dx 127.5000&nbsp; dy 65.5000&nbsp; dist 143.3405</span>
    <span class="snap">grid 0.5000</span>
    <span class="unit">mm</span>
    <span class="mode">Select item(s)</span>
    <span class="last"></span>
</footer>

</body>
</html>
```

FILE: styles.css
```css
* {
    box-sizing: border-box;
}
body {
    margin: 0;
    height: 100vh;
    display: flex;
    flex-direction: column;
    overflow: hidden;
    background: #f0f0f0;
    color: #111;
    font-family: "Open Sans", "Noto Sans", sans-serif;
    font-size: 17px;
}
button,
select {
    font: inherit;
    color: inherit;
}
button {
    padding: 0;
    border: none;
    background: none;
}
.defs {
    position: absolute;
    width: 0;
    height: 0;
}

/* title and menu */
.titlebar {
    height: 33px;
    flex: none;
    display: flex;
    align-items: center;
    background: #f3f3f3;
    color: #8c8c8c;
}
.titlebar .logo {
    width: 24px;
    height: 24px;
}
.titlebar h1 {
    margin: 0 0 0 6px;
    font-size: 17px;
    font-weight: 400;
}
.window-controls {
    margin-left: auto;
    margin-right: 1px;
    display: flex;
}
.window-controls button {
    width: 70px;
    height: 30px;
    display: flex;
    align-items: center;
    justify-content: center;
}
.window-controls svg {
    width: 16px;
    height: 16px;
    fill: none;
    stroke: #8c8c8c;
}
.menubar {
    height: 28px;
    flex: none;
    display: flex;
    background: #fff;
    color: #6d6d6d;
}
.menubar button {
    padding: 0 11px 0 10px;
    line-height: 30px;
}

/* toolbars */
.toolbar {
    height: 56px;
    flex: none;
    display: flex;
    align-items: center;
    padding-left: 5px;
}
.toolbar.options {
    height: 50px;
    padding-bottom: 2px;
}
.tool {
    width: 46px;
    height: 46px;
    flex: none;
    margin: 0 2px 0 1px;
    display: flex;
    align-items: center;
    justify-content: center;
    border: 1px solid transparent;
}
.tool svg {
    width: 36px;
    height: 36px;
}
.tool.active {
    background: #b2d6f3;
    border-color: #2a7ab8;
}
.sep {
    width: 1px;
    height: 42px;
    margin: 0 4px;
    flex: none;
    background: #8e8e8e;
}
.ico-text {
    font: 600 18px "Open Sans", sans-serif;
    fill: #545454;
}
.theta {
    font-style: italic;
}

/* drop-downs */
.combo {
    position: relative;
    height: 32px;
    margin: 0 2px;
    border: 1px solid #cdcdcd;
    border-bottom-color: #a8a8a8;
    border-radius: 2px;
    background: #fdfdfd;
}
.combo select {
    width: 100%;
    height: 100%;
    padding: 0 3px;
    border: none;
    background: none;
    appearance: none;
}
.combo::after {
    content: "";
    position: absolute;
    right: 10px;
    top: 9px;
    width: 8px;
    height: 8px;
    border-right: 1px solid #555;
    border-bottom: 1px solid #555;
    transform: rotate(45deg);
    pointer-events: none;
}
.combo.track {
    width: 230px;
    margin: 0 1px;
}
.combo.via {
    width: 220px;
}
.combo.layer {
    width: 187px;
    margin-left: 1px;
    border-color: #8a8a8a;
}
.combo.layer .swatch {
    position: absolute;
    left: 8px;
    top: 7px;
    width: 14px;
    height: 14px;
    border: 1px solid #222;
    background: #c83434;
}
.combo.layer select {
    padding-left: 29px;
}
.combo.grid {
    width: 254px;
    margin: 0 1px;
}
.combo.zoom {
    width: 144px;
}

/* workspace */
.workspace {
    flex: 1;
    min-height: 0;
    display: flex;
}
.side-tools {
    flex: none;
    display: flex;
    flex-direction: column;
    padding-top: 7px;
}
.side-tools .tool {
    margin: 1px 0 2px;
}
.side-tools .sep {
    width: 42px;
    height: 1px;
    margin: 4px 2px;
}
.side-tools.left {
    width: 50px;
    padding-left: 1px;
}
.side-tools.right {
    width: 58px;
    padding-left: 3px;
    border-right: 6px solid #dcdcdc;
}
.tool.more {
    position: relative;
}
.tool.more::after {
    content: "";
    position: absolute;
    right: 0;
    bottom: 0;
    border-left: 10px solid transparent;
    border-bottom: 10px solid #000;
}
.board {
    flex: 1;
    min-width: 0;
    border: 1px solid #9aa3ab;
    background: #001023;
}
.board svg {
    display: block;
    width: 100%;
    height: 100%;
}

/* board items */
.dot {
    stroke: #7d8893;
}
.pad {
    fill: #df8a8c;
}
.bg {
    fill: #001023;
}
.ol {
    fill: none;
    stroke: #d99092;
}
.hole {
    fill: #5b6873;
}
.court {
    fill: none;
    stroke: #e496e6;
}
.silk {
    fill: none;
    stroke: #eef3f3;
    stroke-width: 2;
}
.rat {
    fill: none;
    stroke: #0e6873;
}
.anchor {
    fill: none;
    stroke: #dc34dc;
}
.txt {
    font: 200 24px "DejaVu Sans", sans-serif;
    fill: #d9e0e4;
    stroke: #d9e0e4;
    stroke-width: 0.6px;
}
.txt .module {
    font-size: 25px;
}
.ref {
    font: 200 22px "DejaVu Sans", sans-serif;
    fill: #fff;
    stroke: #fff;
    stroke-width: 0.6px;
    text-anchor: middle;
}
.ref.small {
    font-size: 18px;
}
.ref .bold {
    stroke-width: 1px;
}
.silk-label {
    font: 700 11px "DejaVu Sans", sans-serif;
    fill: #fff;
    text-anchor: middle;
}
.num,
.net,
.tiny {
    font: 12px "DejaVu Sans Mono", monospace;
    fill: #f6dcdc;
    text-anchor: middle;
}
.net {
    font-size: 9px;
}
.tiny {
    font-size: 5px;
}

/* right panel */
.panel {
    width: 269px;
    flex: none;
}
.panel h2 {
    height: 31px;
    margin: 0;
    padding-left: 5px;
    background: #b9b9b9;
    font-size: 17px;
    font-weight: 400;
    line-height: 32px;
}
.tabs {
    display: flex;
    align-items: flex-end;
    height: 38px;
    padding-left: 1px;
}
.tab {
    width: 70px;
    height: 31px;
    border: 1px solid #e3e3e3;
    border-left: none;
    background: #f2f2f2;
}
.tab.current {
    width: 74px;
    height: 33px;
    padding-right: 10px;
    background: #fafafa;
}
.tab:last-child {
    padding-right: 20px;
}
.pane {
    display: grid;
    grid-template-columns: 236px 1fr;
    align-content: start;
    height: 355px;
    margin-left: 1px;
    padding: 2px 8px 0 3px;
    border-right: 2px solid #e3e3e3;
    border-bottom: 1px solid #dcdcdc;
    background: #fafafa;
}
.layers {
    height: 318px;
    margin: 0;
    padding: 0;
    overflow: hidden;
    list-style: none;
    background: #f0f0f0;
    font-size: 15px;
}
.layers li {
    position: relative;
    display: flex;
    align-items: center;
    height: 24px;
    padding-left: 21px;
}
.layers .selected {
    background: #e1e1e1;
}
.layers .selected::before {
    content: "";
    position: absolute;
    left: 8px;
    border: 6px solid transparent;
    border-left: 7px solid #3f3ff5;
    border-right: none;
}
.layers .swatch {
    width: 20px;
    height: 20px;
}
.layers svg {
    flex: none;
    width: 16px;
    height: 16px;
    margin: 0 6px 0 5px;
}
.f-cu { background: #c83434; }
.b-cu { background: #4d7fc4; }
.f-adhesive { background: #840084; }
.b-adhesive { background: #000084; }
.f-paste { background: #a39189; }
.b-paste { background: #00b0b0; }
.f-silk { background: #f2eda1; }
.b-silk { background: #e8b2a7; }
.f-mask { background: repeating-conic-gradient(#552866 0 25%, #6d3d80 0 50%) 0 0 / 16px 16px; }
.b-mask { background: repeating-conic-gradient(#02665f 0 25%, #1a7d72 0 50%) 0 0 / 16px 16px; }
.drawings { background: #c2c2c2; }
.comments { background: #5994dc; }
.eco1 { background: #b4dbd2; }
.eco2 { background: #d8c852; }
.scroll {
    background: #f3f3f3;
    padding: 25px 0 0 8px;
}
.thumb {
    width: 11px;
    height: 143px;
    background: #858585;
}
.display-options {
    grid-column: 1 / -1;
    display: flex;
    align-items: center;
    height: 28px;
    margin: 3px 0 0 4px;
    padding-left: 11px;
    background: #fff;
    color: #777;
    font-size: 15px;
}
.display-options::before {
    content: "";
    margin-right: 5px;
    border: 5px solid transparent;
    border-left: 6px solid #555;
    border-right: none;
}
.presets {
    display: grid;
    height: 142px;
    padding: 11px 6px 0 7px;
    align-content: start;
    border-bottom: 6px solid #dcdcdc;
    font-size: 15px;
}
.presets label {
    height: 25px;
    line-height: 24px;
}
.presets .combo {
    margin: 0 0 4px;
    font-size: 17px;
}
.filter {
    display: grid;
    grid-template-columns: 127px 1fr;
    padding: 4px 0 0 5px;
    font-size: 15px;
}
.filter label {
    display: flex;
    align-items: center;
    height: 25px;
}
.filter input {
    position: relative;
    width: 20px;
    height: 20px;
    margin: 0 4px 0 0;
    border: 1px solid #777;
    border-radius: 4px;
    background: #f7f7f7;
    appearance: none;
}
.filter input:checked {
    border-color: #0060ba;
    background: #0060ba;
}
.filter input:checked::before {
    content: "";
    position: absolute;
    left: 6px;
    top: 3px;
    width: 5px;
    height: 9px;
    border-right: 1px solid #fff;
    border-bottom: 1px solid #fff;
    transform: rotate(45deg);
}

/* bottom bars */
.info {
    height: 50px;
    flex: none;
    padding: 1px 15px;
    color: #777;
    line-height: 25px;
}
.status {
    height: 26px;
    flex: none;
    display: flex;
    overflow: hidden;
    border-top: 1px solid #d4d4d4;
    line-height: 34px;
}
.status span {
    height: 34px;
    padding-left: 4px;
    border-right: 1px solid #d4d4d4;
    white-space: nowrap;
}
.status .message { width: 295px; }
.status .z { width: 117px; }
.status .xy { width: 251px; }
.status .delta { width: 397px; }
.status .snap { width: 288px; }
.status .unit { width: 92px; }
.status .mode { width: 254px; }
.status .last { border: none; }
```
